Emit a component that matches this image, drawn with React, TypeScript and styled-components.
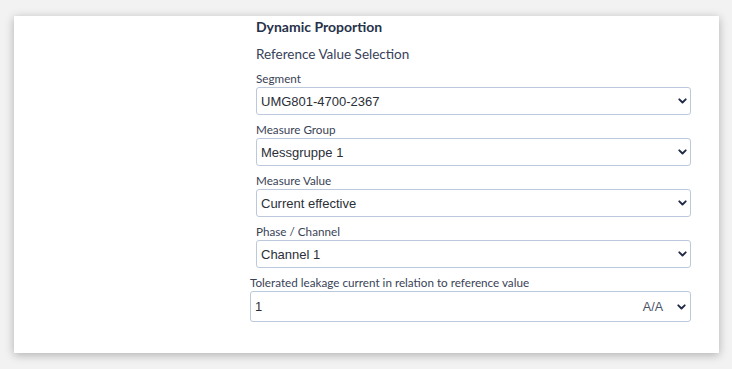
import React from "react";
import styled, { createGlobalStyle } from "styled-components";

const GlobalStyle = createGlobalStyle`
  html, body {
    margin: 0;
    padding: 0;
    background: #f2f2f2;
  }
`;

const fields = [
  { label: "Segment", value: "UMG801-4700-2367" },
  { label: "Measure Group", value: "Messgruppe 1" },
  { label: "Measure Value", value: "Current effective" },
  { label: "Phase / Channel", value: "Channel 1" },
];

const Chevron: React.FC = () => (
  <svg width="9" height="6" viewBox="0 0 9 6">
    <path d="M1.3 1.3 L4.5 4.5 L7.7 1.3" fill="none" stroke="#1f2a44" strokeWidth="1.9" strokeLinecap="round" strokeLinejoin="round" />
  </svg>
);

const App: React.FC = () => {
  return (
    <>
      <GlobalStyle />
      <Page>
        <Card>
          <Column>
            <Section>
              <Title>Dynamic Proportion</Title>
              <Subtitle>Reference Value Selection</Subtitle>
              {fields.map((f) => (
                <Field key={f.label}>
                  <Label>{f.label}</Label>
                  <SelectBox>
                    <Select defaultValue={f.value}>
                      <option>{f.value}</option>
                    </Select>
                    <ChevronSlot>
                      <Chevron />
                    </ChevronSlot>
                  </SelectBox>
                </Field>
              ))}
            </Section>

            <Field>
              <Label>Tolerated leakage current in relation to reference value</Label>
              <UnitInput>
                <NumberInput defaultValue="1" />
                <Unit>A/A</Unit>
                <Chevron />
              </UnitInput>
            </Field>
          </Column>
        </Card>
      </Page>
    </>
  );
};

export default App;

const Page = styled.div`
  width: 732px;
  height: 369px;
  padding: 16px 13px 16px 14px;
  box-sizing: border-box;
`;

const Card = styled.div`
  height: 337px;
  background: #fff;
  box-shadow: 0 2px 9px rgba(0, 0, 0, 0.28);
  padding: 2px 28px 0 236px;
  box-sizing: border-box;
`;

const Column = styled.div`
  display: flex;
  flex-direction: column;
  gap: 7px;
`;

const Section = styled.div`
  display: flex;
  flex-direction: column;
  gap: 7px;
  padding-left: 6px;
`;

const Title = styled.div`
  font-family: "Lato", sans-serif;
  font-weight: 700;
  font-size: 14px;
  color: #26324a;
  line-height: 18px;
`;

const Subtitle = styled.div`
  font-family: "Lato", sans-serif;
  font-size: 13.5px;
  color: #37415a;
  line-height: 18px;
  margin-top: 2px;
  margin-bottom: 1px;
`;

const Field = styled.div`
  display: flex;
  flex-direction: column;
  gap: 1px;
`;

const Label = styled.div`
  font-family: "Lato", sans-serif;
  font-size: 11.7px;
  color: #3a4256;
  line-height: 15px;
`;

const SelectBox = styled.div`
  position: relative;
  height: 28px;
`;

const Select = styled.select`
  appearance: none;
  width: 100%;
  height: 28px;
  border: 1px solid #bcc8dc;
  border-radius: 3px;
  background: #fff;
  font-family: "Liberation Sans", Arial, sans-serif;
  font-size: 13px;
  color: #2b2f38;
  padding: 0 24px 0 4px;
  outline: none;
`;

const ChevronSlot = styled.span`
  position: absolute;
  right: 4px;
  top: 11px;
  display: flex;
  pointer-events: none;
`;

const UnitInput = styled.div`
  display: flex;
  align-items: center;
  height: 31px;
  border: 1px solid #bcc8dc;
  border-radius: 3px;
  box-sizing: border-box;
  padding-right: 4px;
`;

const NumberInput = styled.input`
  flex: 1;
  border: none;
  outline: none;
  font-family: "Liberation Sans", Arial, sans-serif;
  font-size: 13px;
  color: #2b2f38;
  padding: 0 4px;
  background: transparent;
`;

const Unit = styled.span`
  font-family: "Liberation Sans", Arial, sans-serif;
  font-size: 12.5px;
  color: #4a5266;
  margin-right: 14px;
`;
